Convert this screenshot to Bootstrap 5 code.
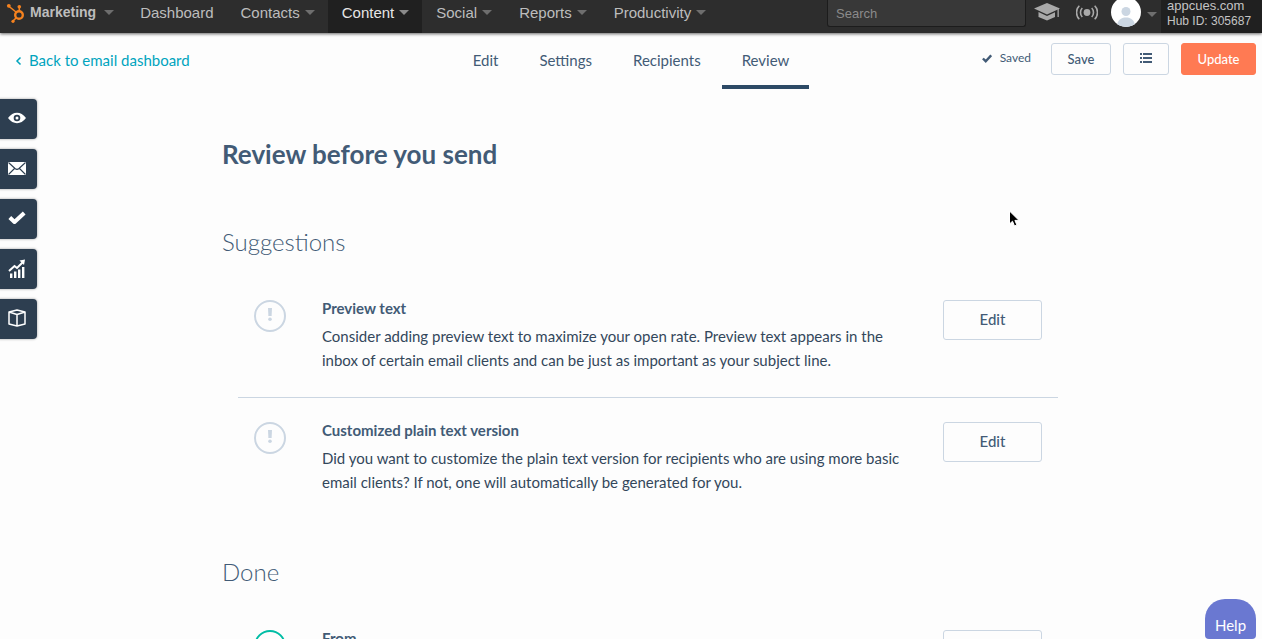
<!DOCTYPE html>
<html lang="en">
<head>
<meta charset="utf-8">
<meta name="viewport" content="width=device-width, initial-scale=1">
<title>Review before you send</title>
<link href="https://cdn.jsdelivr.net/npm/bootstrap@5.3.0/dist/css/bootstrap.min.css" rel="stylesheet">
<style>
  :root { --ink: #33475b; --slate: #425b76; --line: #cbd6e2; --teal: #00a4bd; }
  html { scrollbar-width: none; }
  body { font-family: Lato, "Liberation Sans", sans-serif; font-size: 15px; line-height: 24px; color: var(--ink); background: #fdfdfd; }

  /* global bar */
  .topbar { height: 33px; background: #2d2d2d; font-family: "Liberation Sans", Arial, sans-serif; box-shadow: 0 1px 3px rgba(0,0,0,.6); position: relative; z-index: 3; }
  .topbar .nav-link { display: flex; gap: 5px; padding: 0 13px 8px 14px; height: 33px; line-height: 25px; color: #bdbdbd; font-size: 15px; align-items: center; }
  .topbar .nav-link.brand { font-size: 14px; font-weight: 700; padding: 0 12px 8px 6px; }
  .topbar .nav-link.active { background: #202020; color: #e6e6e6; }
  .topbar .nav-link.active .tri { border-top-color: #8a8a8a; }
  .tri { border: 5px solid transparent; border-top-color: #6e6e6e; border-bottom: 0; }
  .brand .tri { margin-left: 3px; }
  .search-box { width: 199px; height: 27px; padding: 0 8px; border: 1px solid #1c1c1c; border-top: 0; border-radius: 0 0 3px 3px; background: #383838; color: #ccc; font-size: 13px; }
  .search-box::placeholder { color: #8b8b8b; }
  .icon-btn { border: 0; padding: 0; background: none; display: flex; }
  .account { gap: 6px; margin-left: 13px; }
  .account .tri { margin-top: 12px; }
  .hub { width: 101px; height: 33px; padding-left: 6px; background: #202020; color: #c4c4c4; font-size: 12px; line-height: 18px; }
  .hub-name { font-size: 13px; line-height: 12px; }

  /* editor bar */
  .subbar { display: grid; grid-template-columns: 1fr auto 1fr; min-height: 56px; }
  .back { color: var(--teal); text-decoration: none; padding: 15px 0 0 15px; }
  .back svg { margin-right: 7px; }
  .tabs { gap: 1px; }
  .tabs .nav-link { color: var(--slate); padding: 15px 20px 13px; border-bottom: 4px solid transparent; line-height: 24px; }
  .tabs .nav-link.active { border-bottom-color: #2d4a66; }
  .actions { gap: 12px; padding: 10px 6px 0 0; }
  .btn-line { --bs-btn-color: var(--slate); --bs-btn-border-color: var(--line); --bs-btn-bg: transparent; --bs-btn-border-radius: 3px; --bs-btn-hover-bg: #f5f8fa; --bs-btn-hover-border-color: var(--line); }
  .btn-compact { --bs-btn-font-size: 13px; min-width: 60px; height: 32px; padding: 0; line-height: 28px; font-weight: 500; }
  .btn-list { min-width: 46px; display: flex; justify-content: center; padding-top: 9px; }
  .btn-go { --bs-btn-color: #fff; --bs-btn-bg: #ff7a53; --bs-btn-border-color: #ff7a53; --bs-btn-hover-bg: #ff8f6e; --bs-btn-hover-color: #fff; --bs-btn-border-radius: 3px; min-width: 75px; }
  .saved { font-size: 12px; line-height: 30px; color: var(--slate); margin-right: 8px; }

  /* left tool rail */
  .rail { position: fixed; left: 0; top: 99px; z-index: 2; gap: 10px; }
  .rail button { width: 37px; height: 40px; border: 0; padding: 0 3px 2px 0; border-radius: 0 4px 4px 0; background: #2d3e50; box-shadow: 0 0 2px 1px rgba(0,0,0,.18); display: flex; align-items: center; justify-content: center; }

  /* checklist */
  .review { max-width: 854px; padding: 49px 0 0 18px; }
  .review h1 { font-size: 26px; line-height: 32px; font-weight: 700; color: var(--slate); margin: 0 0 57px; }
  .review h2 { font-size: 24px; line-height: 30px; font-weight: 300; color: var(--slate); margin: 0 0 19px; }
  .checks { padding: 0; list-style: none; margin: 0 0 38px 16px; }
  .checks li { padding: 24px 16px 25px; }
  .checks li + li { border-top: 1px solid var(--line); }
  .mark-icon { margin-right: 36px; }
  .checks h3 { font-size: 15px; line-height: 16px; font-weight: 700; color: var(--slate); margin: 0 0 8px; }
  .checks p { margin: 0; max-width: 584px; }
  .btn-edit { --bs-btn-font-size: 15px; width: 99px; height: 40px; padding: 0 0 2px; font-weight: 500; }
  .help { position: fixed; right: 6px; bottom: 0; width: 51px; height: 40px; border: 0; padding: 12px 0 0; border-radius: 20px 20px 4px 4px; background: #6a78d1; color: #fff; z-index: 2; }
  .pointer { position: absolute; left: 1008px; top: 210px; z-index: 4; pointer-events: none; }
</style>
</head>
<body>
<header class="topbar d-flex">
  <nav class="nav flex-nowrap" aria-label="Main">
    <a class="nav-link brand" href="#">
      <svg width="19" height="22" viewBox="0 0 19 22" fill="none" stroke="#f5821f" aria-hidden="true"><circle cx="13" cy="13" r="3.800" stroke-width="2.400"/><path d="M2.500 4 10 10M13.300 4.500V9M10 16 7 19" stroke-width="1.600"/><circle cx="2.800" cy="3.800" r="1.900" fill="#f5821f" stroke="none"/><circle cx="13.300" cy="4.800" r="1.800" fill="#f5821f" stroke="none"/><circle cx="7" cy="19.300" r="1.600" fill="#f5821f" stroke="none"/></svg>
      Marketing <span class="tri"></span></a>
    <a class="nav-link" href="#">Dashboard</a>
    <a class="nav-link" href="#">Contacts <span class="tri"></span></a>
    <a class="nav-link active" href="#">Content <span class="tri"></span></a>
    <a class="nav-link" href="#">Social <span class="tri"></span></a>
    <a class="nav-link" href="#">Reports <span class="tri"></span></a>
    <a class="nav-link" href="#">Productivity <span class="tri"></span></a>
  </nav>
  <div class="d-flex ms-auto">
    <input class="search-box" type="search" placeholder="Search" aria-label="Search">
    <button class="icon-btn ms-2" aria-label="Academy"><svg width="26" height="24" viewBox="0 0 26 24" fill="#a9a9a9"><path d="M13 3 26 8.500 13 14.500 0 8.500z"/><path d="M4.500 12 13 16 21 12.200V17L13 20.500 4.500 17z"/><path d="M23.500 9h1.300v8h-1.300z"/></svg></button>
    <button class="icon-btn ms-3" aria-label="Notifications"><svg width="22" height="24" viewBox="0 0 22 24" fill="none" stroke="#a9a9a9" stroke-width="1.600"><circle cx="11" cy="12.500" r="3.400" fill="#a9a9a9" stroke="none"/><path d="M6.300 8a6.500 6.500 0 0 0 0 9M3.300 5.800a9.500 9.500 0 0 0 0 13.400M15.700 8a6.500 6.500 0 0 1 0 9M18.700 5.800a9.500 9.500 0 0 1 0 13.400"/></svg></button>
    <button class="icon-btn align-items-start account" aria-label="Account">
      <svg width="30" height="27" viewBox="0 0 30 27"><defs><clipPath id="face"><circle cx="15" cy="12" r="15"/></clipPath></defs><circle cx="15" cy="12" r="15" fill="#fff"/><g clip-path="url(#face)" fill="#cbd6e2"><circle cx="15" cy="11.500" r="4.500"/><path d="M6 27c0-7 4-9.500 9-9.500S24 20 24 27z"/></g></svg>
      <span class="tri"></span></button>
    <div class="hub ms-1"><div class="hub-name">appcues.com</div>Hub ID: 305687</div>
  </div>
</header>

<div class="subbar">
  <a class="back" href="#"><svg width="7" height="12" viewBox="0 0 7 12" fill="none" stroke="#00a4bd" stroke-width="1.500" aria-hidden="true"><path d="M5.500 1.500 2 5l3.500 3.500"/></svg>Back to email dashboard</a>
  <nav class="tabs nav flex-nowrap" aria-label="Email steps">
    <a class="nav-link" href="#">Edit</a>
    <a class="nav-link" href="#">Settings</a>
    <a class="nav-link" href="#">Recipients</a>
    <a class="nav-link active" href="#" aria-current="page">Review</a>
  </nav>
  <div class="actions d-flex justify-content-end align-items-start">
    <span class="saved"><svg class="me-2" width="10" height="9" viewBox="0 0 10 9" fill="none" stroke="#425b76" stroke-width="2.400" aria-hidden="true"><path d="M.9 4.500 3.700 7.200 9.200 1.300"/></svg>Saved</span>
    <button class="btn btn-line btn-compact">Save</button>
    <button class="btn btn-line btn-compact btn-list" aria-label="More"><svg width="12" height="10" viewBox="0 0 12 10" fill="#425b76"><path d="M0 0h2v2H0zM3 0h9v2H3zM0 4h2v2H0zM3 4h9v2H3zM0 8h2v2H0zM3 8h9v2H3z"/></svg></button>
    <button class="btn btn-go btn-compact">Update</button>
  </div>
</div>

<aside class="rail d-grid" aria-label="Tools">
  <button aria-label="Preview"><svg width="18" height="12" viewBox="0 0 18 12"><path d="M0 6Q4 .8 9 .8T18 6Q14 11.200 9 11.200T0 6z" fill="#fff"/><circle cx="9" cy="6" r="3.300" fill="#2d3e50"/><circle cx="9" cy="6" r="1.500" fill="#fff"/></svg></button>
  <button aria-label="Send test"><svg width="18" height="13" viewBox="0 0 18 13"><path d="M0 0h18v13H0z" fill="#fff"/><path d="M.5.5 7 6.500Q9 8.200 11 6.500L17.500.5M.5 12.500 6.500 6.500M17.500 12.500 11.500 6.500" fill="none" stroke="#2d3e50" stroke-width="1.100"/></svg></button>
  <button aria-label="Checks"><svg width="18" height="14" viewBox="0 0 18 14" fill="none" stroke="#fff" stroke-width="4" stroke-linejoin="round"><path d="M1.800 6.500 6.500 11 16.200 2"/></svg></button>
  <button aria-label="Performance"><svg width="18" height="19" viewBox="0 0 18 19" fill="#fff"><path d="M2 14.500h2.400V19H2zM6 12.500h2.400V19H6zM10 10.500h2.400V19H10zM14 8h2.400v11H14z"/><path d="M1 12 6.500 7l2.500 2L14.500 3.500" fill="none" stroke="#fff" stroke-width="2"/><path d="M11.500 1.500 17 .5 16 6z"/></svg></button>
  <button aria-label="Package"><svg width="18" height="18" viewBox="0 0 18 18" fill="none" stroke="#fff" stroke-width="1.500" stroke-linejoin="round"><path d="M1 3 9 1l8 2v12l-8 2-8-2zM1 3l8 2.500L17 3M9 5.500V17"/></svg></button>
</aside>

<main class="review mx-auto">
  <h1>Review before you send</h1>
  <h2>Suggestions</h2>
  <ul class="checks">
    <li class="d-flex align-items-start">
      <svg class="mark-icon flex-shrink-0" width="32" height="32" viewBox="0 0 32 32" aria-hidden="true"><circle cx="16" cy="16" r="15" fill="none" stroke="#cbd6e2" stroke-width="2"/><path d="M14 8h4l-.4 8h-3.200z" fill="#cbd6e2"/><circle cx="16" cy="19.300" r="1.800" fill="#cbd6e2"/></svg>
      <div><h3>Preview text</h3><p>Consider adding preview text to maximize your open rate. Preview text appears in the inbox of certain email clients and can be just as important as your subject line.</p></div>
      <button class="btn btn-line btn-edit ms-auto flex-shrink-0">Edit</button>
    </li>
    <li class="d-flex align-items-start">
      <svg class="mark-icon flex-shrink-0" width="32" height="32" viewBox="0 0 32 32" aria-hidden="true"><circle cx="16" cy="16" r="15" fill="none" stroke="#cbd6e2" stroke-width="2"/><path d="M14 8h4l-.4 8h-3.200z" fill="#cbd6e2"/><circle cx="16" cy="19.300" r="1.800" fill="#cbd6e2"/></svg>
      <div><h3>Customized plain text version</h3><p>Did you want to customize the plain text version for recipients who are using more basic email clients? If not, one will automatically be generated for you.</p></div>
      <button class="btn btn-line btn-edit ms-auto flex-shrink-0">Edit</button>
    </li>
  </ul>
  <h2>Done</h2>
  <ul class="checks">
    <li class="d-flex align-items-start">
      <svg class="mark-icon flex-shrink-0" width="32" height="32" viewBox="0 0 32 32" fill="none" stroke="#00bda5" stroke-width="2" aria-hidden="true"><circle cx="16" cy="16" r="15"/><path d="m10 16.500 4 4 8-8"/></svg>
      <div><h3>From</h3></div>
      <button class="btn btn-line btn-edit ms-auto flex-shrink-0">Edit</button>
    </li>
  </ul>
</main>

<button class="help">Help</button>
<svg class="pointer" width="12" height="18" viewBox="0 0 12 18" aria-hidden="true"><path d="M1.500 1v13l3-2.800 2 4.800 2.400-1-2-4.600H11z" fill="#000" stroke="#fff"/></svg>
<script src="https://cdn.jsdelivr.net/npm/bootstrap@5.3.0/dist/js/bootstrap.bundle.min.js"></script>
</body>
</html>
